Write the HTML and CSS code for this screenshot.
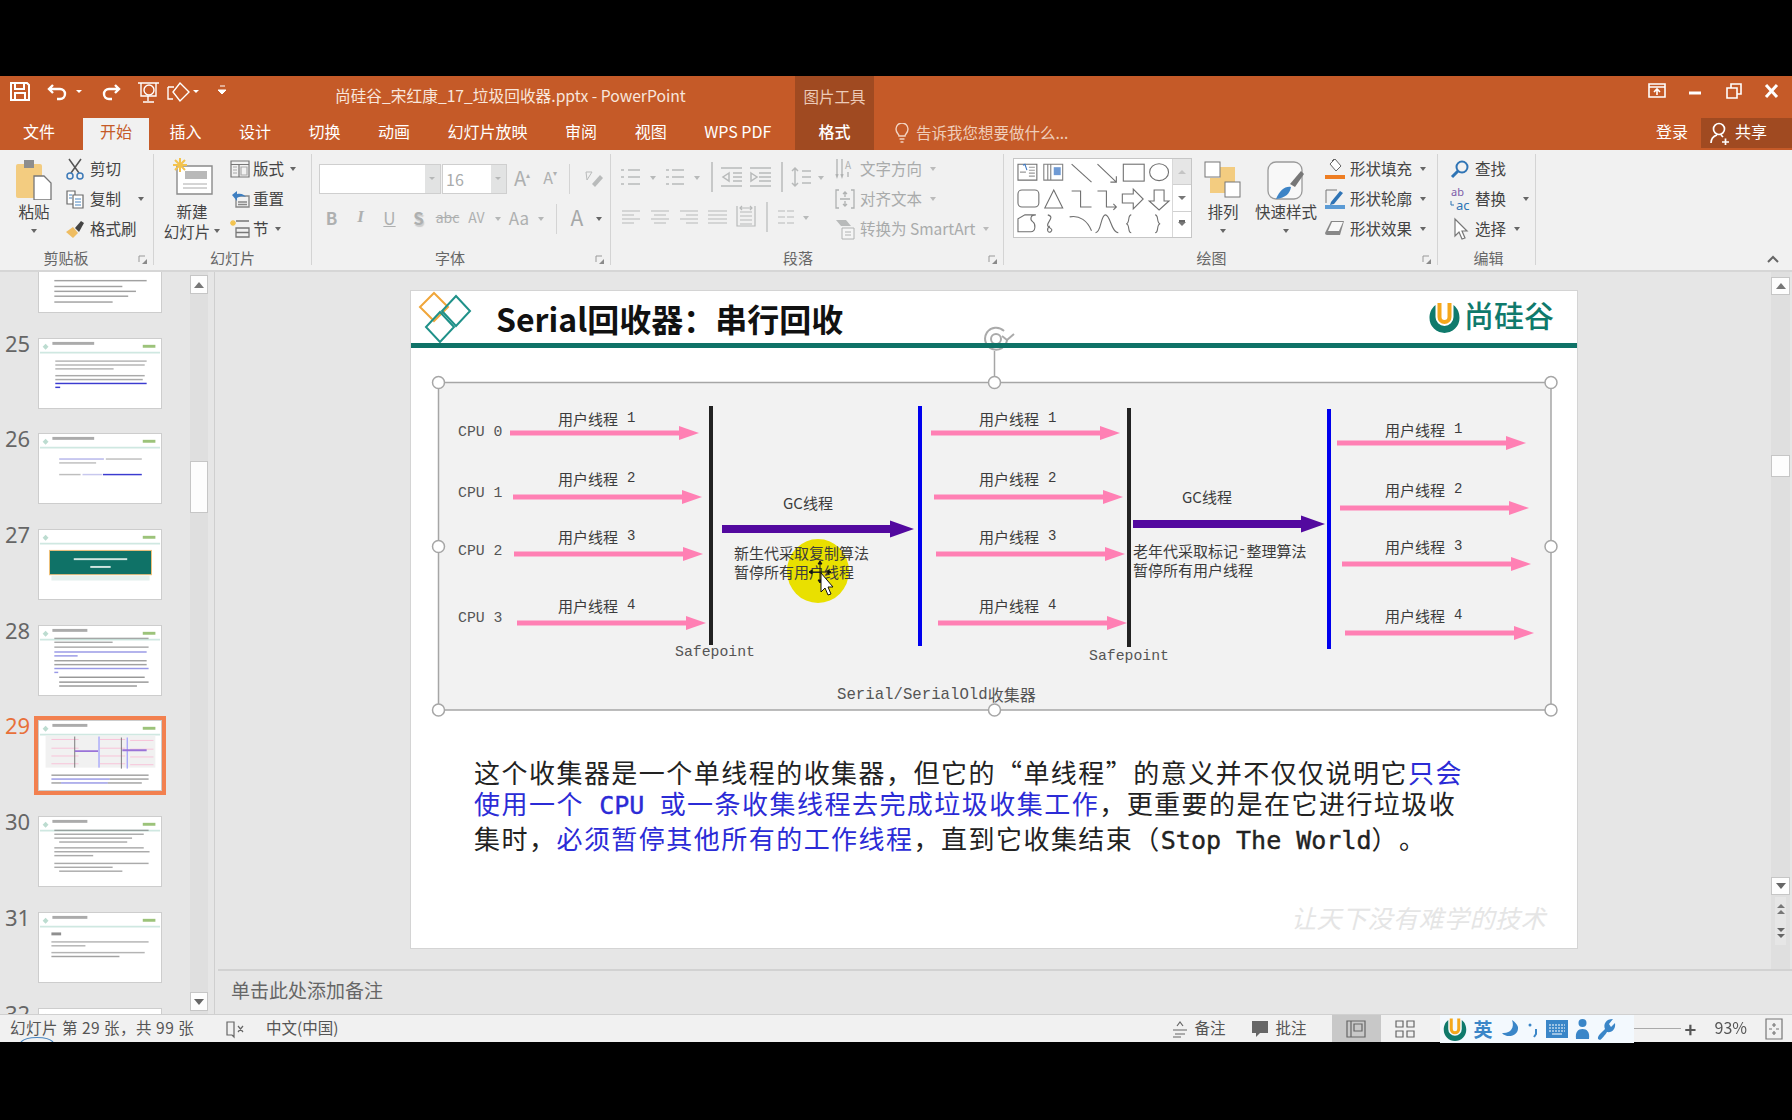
FILE: index.html
```html
<!DOCTYPE html>
<html lang="zh-CN">
<head>
    <meta charset="UTF-8">
    <title>尚硅谷_宋红康_17_垃圾回收器.pptx - PowerPoint</title>
    <link rel="stylesheet" href="styles.css">
</head>
<body>
<svg class="defs" width="0" height="0">
    <defs>
        <symbol id="u-logo" viewBox="0 0 32 32">
            <path d="M7 4C2 8 1 13 1 17a15 15 0 0 0 30 0c0-4-1-9-6-13v12a9 9 0 0 1-18 0z" fill="#0f7a6c"/>
            <path d="M11 2v14a5 5 0 0 0 10 0V2" fill="none" stroke="#f5a81c" stroke-width="4"/>
        </symbol>
        <symbol id="launcher" viewBox="0 0 10 10">
            <path d="M1 1h6M1 1v6" stroke="#999" fill="none"/>
            <path d="M9 4v5H4z" fill="#8a8a8a"/>
        </symbol>
        <symbol id="thumb-head" viewBox="0 0 124 71">
            <path d="M0 14h124" stroke="#cfe8e1" stroke-width="2"/>
            <path d="M6 5l3 3-3 3-3-3z" fill="#bcdcd0"/>
            <rect x="106" y="6" width="13" height="3" fill="#9cc37a"/>
        </symbol>
        <g id="pink">
            <rect x="0" y="-2.5" width="170" height="5" fill="#ff80b4"/>
            <polygon points="169,-7 189,0 169,7" fill="#ff80b4"/>
        </g>
        <g id="violet">
            <rect x="0" y="-4" width="170" height="8" fill="#53099f"/>
            <polygon points="168,-8.5 192,0 168,8.5" fill="#53099f"/>
        </g>
    </defs>
</svg>

<div class="app">
    <header class="chrome">
        <div class="title-left">
            <svg class="qat" width="240" height="30" viewBox="0 0 240 30" fill="none" stroke="#fff" stroke-width="2">
                <path d="M11 7h16l2 2v15H11zM15 7v6h9V7M15 24v-7h10v7"/>
                <path d="M53 9l-4 4 4 4M49 13h11a5 5 0 0 1 0 10h-3" stroke-width="2.4"/>
                <path d="M76 14h6l-3 3z" fill="#fff" stroke="none"/>
                <path d="M115 9l4 4-4 4M119 13h-10a5 5 0 0 0 0 10h3" stroke-width="2.4"/>
                <path d="M138 7h21M141 7v13h15V7M148 20v5M143 26h11" stroke-width="1.4"/>
                <circle cx="149" cy="14" r="5" stroke-width="1.4"/>
                <path d="M168 11h6M168 11v12h5M180 7l9 9-9 9-7-9z" stroke-width="1.4"/>
                <path d="M193 14h6l-3 3z" fill="#fff" stroke="none"/>
                <path d="M220 10h5M218 14h8l-4 4z" fill="#fff" stroke-width="1"/>
            </svg>
            <span class="doc-title">尚硅谷_宋红康_17_垃圾回收器.pptx - PowerPoint</span>
        </div>
        <div class="ctx-label">图片工具</div>
        <div class="win-btns">
            <svg width="143" height="30" viewBox="0 0 143 30" fill="none" stroke="#fff" stroke-width="1.6">
                <path d="M1 8h16v13H1zM1 11h16M9 19v-6M6 16l3-3 3 3"/>
                <path d="M41 17h12" stroke-width="3"/>
                <path d="M79 12h10v10H79zM83 12V8h10v10h-4"/>
                <path d="M118 9l11 12M129 9l-11 12" stroke-width="3"/>
            </svg>
        </div>

        <nav class="tabs">
            <span class="tab tab-file">文件</span>
            <span class="tab active">开始</span>
            <span class="tab">插入</span>
            <span class="tab">设计</span>
            <span class="tab">切换</span>
            <span class="tab">动画</span>
            <span class="tab">幻灯片放映</span>
            <span class="tab">审阅</span>
            <span class="tab">视图</span>
            <span class="tab">WPS PDF</span>
        </nav>
        <div class="ctx-tab">格式</div>
        <div class="tab-right">
            <div class="tell-me">
                <svg width="14" height="20" viewBox="0 0 14 20" fill="none" stroke="#f2d3c2" stroke-width="1.4">
                    <path d="M4 13c0-2-3-3-3-7a6 6 0 0 1 12 0c0 4-3 5-3 7zM4.500 16h5M5.500 19h3"/>
                </svg>
                <span>告诉我您想要做什么...</span>
            </div>
            <span class="login">登录</span>
            <div class="share">
                <svg width="20" height="24" viewBox="0 0 20 24" fill="none" stroke="#fff" stroke-width="1.7">
                    <circle cx="9" cy="8" r="5.500"/>
                    <path d="M1 22c0-5 3-7 6-8M11 14l2 2M12 21h7M15.500 17.500v7"/>
                </svg>
                <span>共享</span>
            </div>
        </div>
    </header>

    <section class="ribbon">
        <div class="group g-clip">
            <div class="group-body">
                <div class="large paste">
                    <svg width="36" height="46" viewBox="0 0 36 46">
                        <rect x="0" y="10" width="26" height="34" rx="2" fill="#f3cc80"/>
                        <rect x="8" y="6" width="10" height="8" fill="#8d8d8d"/>
                        <path d="M18 22h10l7 7v17H18z" fill="#fff" stroke="#777" stroke-width="1.3"/>
                    </svg>
                    <span>粘贴</span>
                    <i class="caret"></i>
                </div>
                <div class="small-col">
                    <div class="small"><svg width="20" height="22" viewBox="0 0 20 22" fill="none" stroke="#555" stroke-width="1.5"><path d="M4 1l10 14M16 1L6 15"/><circle cx="5" cy="18" r="3" stroke="#3d7ab8"/><circle cx="15" cy="18" r="3" stroke="#3d7ab8"/></svg><span>剪切</span></div>
                    <div class="small"><svg width="20" height="20" viewBox="0 0 20 20" fill="#fff" stroke="#6a6a6a" stroke-width="1.2"><path d="M2 2h8v13H2z"/><path d="M8 6h10v13H8z"/><path d="M10 10h6M10 13h6M10 16h6M4 6h3M4 9h3" stroke="#4a86c0"/></svg><span>复制</span><i class="caret caret-far"></i></div>
                    <div class="small"><svg width="20" height="20" viewBox="0 0 20 20"><path d="M1 13l7-5 5 6-5 5z" fill="#efbd62"/><path d="M10 9l6-7 3 2-5 9z" fill="#444"/></svg><span>格式刷</span></div>
                </div>
            </div>
            <div class="group-label">剪贴板<svg class="launch" width="10" height="10"><use href="#launcher"/></svg></div>
        </div>

        <div class="group g-slide">
            <div class="group-body">
                <div class="large new-slide">
                    <svg width="42" height="46" viewBox="0 0 42 46">
                        <path d="M6 12h35v28H6z" fill="#fff" stroke="#8b8b8b" stroke-width="1.4"/>
                        <rect x="14" y="17" width="22" height="8" fill="#b9b9b9"/>
                        <path d="M12 30h24M12 34h24" stroke="#aaa"/>
                        <path d="M9 4v14M2 11h14M4 6l10 10M14 6L4 16" stroke="#f3c34e" stroke-width="2"/>
                    </svg>
                    <span>新建</span>
                    <span class="with-caret">幻灯片<i class="caret"></i></span>
                </div>
                <div class="small-col">
                    <div class="small"><svg width="20" height="20" viewBox="0 0 20 20" fill="none" stroke="#777" stroke-width="1.2"><path d="M1 2h18v16H1zM1 5.500h18M9 5.500V18"/><path d="M3 8h4M3 11h4M3 14h4M11 8h6v8h-6z" stroke="#aaa"/></svg><span>版式</span><i class="caret"></i></div>
                    <div class="small"><svg width="20" height="20" viewBox="0 0 20 20" fill="none" stroke-width="1.4"><path d="M6 7h13v11H6zM8 13h9M8 15.500h9" stroke="#888"/><path d="M2 6l5-4v3c5-1 7 1 9 3-3-1-6-1-9 1v3z" fill="#3e7fc1"/></svg><span>重置</span></div>
                    <div class="small"><svg width="20" height="20" viewBox="0 0 20 20" fill="none" stroke="#777" stroke-width="1.3"><path d="M6 2h13M6 9h13v9H6zM6 13.500h13"/><path d="M3 1v6M0 4h6M1 2l4 4M5 2L1 6" stroke="#f3c34e"/></svg><span>节</span><i class="caret"></i></div>
                </div>
            </div>
            <div class="group-label">幻灯片</div>
        </div>

        <div class="group g-font">
            <div class="group-body font-body">
                <div class="font-row">
                    <span class="combo"><i class="combo-arrow"></i></span>
                    <span class="combo combo-size">16<i class="combo-arrow"></i></span>
                    <span class="fmt grow-a">A<sup>▴</sup></span>
                    <span class="fmt shrink-a">A<sup>▾</sup></span>
                    <i class="vsep"></i>
                    <svg width="20" height="20" viewBox="0 0 20 20"><path d="M3 3l6 0-5 8z" fill="none" stroke="#b9bbbb"/><path d="M9 15l8-9 3 3-8 9z" fill="#b9bbbb"/></svg>
                </div>
                <div class="font-row row-fmt">
                    <b class="fmt">B</b>
                    <i class="fmt serif">I</i>
                    <u class="fmt">U</u>
                    <span class="fmt shadow">S</span>
                    <s class="fmt small-fmt">abc</s>
                    <span class="fmt small-fmt">AV</span>
                    <i class="caret"></i>
                    <span class="fmt aa">Aa</span>
                    <i class="caret"></i>
                    <i class="vsep sep-a"></i>
                    <span class="fmt big-a">A</span>
                    <i class="caret"></i>
                </div>
            </div>
            <div class="group-label">字体<svg class="launch" width="10" height="10"><use href="#launcher"/></svg></div>
        </div>

        <div class="group g-para">
            <div class="group-body">
                <svg class="para-icons" width="224" height="84" viewBox="0 0 224 84" fill="none" stroke="#b8baba" stroke-width="1.5">
                    <path d="M17 8h12M17 15h12M17 22h12M10 8h3M10 15h3M10 22h3"/>
                    <path d="M39 14h6l-3 4z" fill="#b8baba" stroke="none"/>
                    <path d="M61 8h12M61 15h12M61 22h12M55 8h3M55 15h3M55 22h3"/>
                    <path d="M83 14h6l-3 4z" fill="#b8baba" stroke="none"/>
                    <path d="M101 0v30"/>
                    <path d="M110 6h21M122 11h9M122 15h9M122 19h9M110 24h21M118 11l-6 4 6 4z"/>
                    <path d="M139 6h21M148 11h12M148 15h12M148 19h12M139 24h21M140 11l6 4-6 4z"/>
                    <path d="M171 0v30"/>
                    <path d="M184 6v18M181 9l3-3 3 3M181 21l3 3 3-3M191 9h9M191 15h9M191 21h9"/>
                    <path d="M207 14h6l-3 4z" fill="#b8baba" stroke="none"/>
                    <g stroke-width="1.2">
                        <path d="M11 49h18M11 53h12M11 57h18M11 61h12"/>
                        <path d="M40 49h18M43 53h12M40 57h18M43 61h12"/>
                        <path d="M69 49h18M75 53h12M69 57h18M75 61h12"/>
                        <path d="M97 49h19M97 53h19M97 57h19M97 61h19"/>
                        <path d="M126 44v20h18V44M129 50h12M129 54h12M129 58h12M129 62h12M129 46h12M131 44l-2 2 2 2M139 44l2 2-2 2"/>
                        <path d="M156 40v30"/>
                        <path d="M167 49h7M176 49h7M167 55h7M176 55h7M167 61h7M176 61h7"/>
                    </g>
                    <path d="M192 54h6l-3 4z" fill="#b8baba" stroke="none"/>
                </svg>
                <div class="small-col dim">
                    <div class="small"><svg class="open" width="20" height="22" viewBox="0 0 20 22" fill="none" stroke="#b0b2b2" stroke-width="1.3"><path d="M2 1v17M7 1v17M1 16l1 3 1-3M6 16l1 3 1-3M13 14v5"/><text class="icon-a" x="10" y="11">A</text></svg><span>文字方向</span><i class="caret"></i></div>
                    <div class="small"><svg width="20" height="22" viewBox="0 0 20 22" fill="none" stroke="#b0b2b2" stroke-width="1.3"><path d="M4 2H1v18h3M16 2h3v18h-3M10 4v5M8 6l2-2 2 2M10 18v-5M8 16l2 2 2-2M5 11h10"/></svg><span>对齐文本</span><i class="caret"></i></div>
                    <div class="small"><svg width="20" height="22" viewBox="0 0 20 22"><path d="M1 2h10l5 6H6z" fill="#b8baba"/><path d="M7 10h12v11H7z" fill="#f5f5f5" stroke="#b0b2b2"/><path d="M10 14h6M10 17h6" stroke="#b0b2b2"/></svg><span>转换为 SmartArt</span><i class="caret"></i></div>
                </div>
            </div>
            <div class="group-label">段落<svg class="launch" width="10" height="10"><use href="#launcher"/></svg></div>
        </div>

        <div class="group g-draw">
            <div class="group-body">
                <div class="gallery">
                    <svg width="160" height="78" viewBox="0 0 160 78" fill="none" stroke="#707070" stroke-width="1.1">
                        <path d="M4 5h19v16H4z"/><path d="M6 13h6M15 8h6M15 11h6M15 14h6M15 17h6" stroke="#999"/>
                        <path d="M9 6l2-1 2 6" stroke="#3d78c2"/>
                        <path d="M30 5h19v16H30zM34 5v16M37 5v16" stroke="#808080"/><rect x="40" y="8" width="7" height="8" fill="#6f9ad4" stroke="none"/>
                        <path d="M58 5l20 18"/>
                        <path d="M84 5l19 18M103 17v6h-6"/>
                        <rect x="110" y="5" width="21" height="17"/>
                        <ellipse cx="146" cy="13" rx="9.500" ry="8.500"/>
                        <rect x="4" y="31" width="21" height="17" rx="4"/>
                        <path d="M40 31l-9 18h18z"/>
                        <path d="M58 32h9v16h11"/>
                        <path d="M84 32h9v16h10M100 45l3 3-3 3"/>
                        <path d="M109 35h11v-5l10 10-10 10v-6h-11z"/>
                        <path d="M141 31h10v11h5l-10 9-10-9h5z"/>
                        <path d="M4 73V60l7-4h11c-6 0-6 5-3 7 3 2 3 10-2 10z"/>
                        <path d="M34 56c8 2-2 8 0 11 2 3 6 3 3 6-3 2-5-3-1-6"/>
                        <path d="M56 58c10-2 18 4 22 14"/>
                        <path d="M82 74c6 0 5-18 10-18s6 18 13 18"/>
                        <path d="M118 56c-4 0-1 8-5 9 4 1 1 9 5 9"/>
                        <path d="M142 56c4 0 1 8 5 9-4 1-1 9-5 9"/>
                    </svg>
                    <div class="spinner">
                        <span><i class="tri up"></i></span>
                        <span class="on"><i class="tri down"></i></span>
                        <span class="on"><i class="tri down more"></i></span>
                    </div>
                </div>
                <div class="large arrange">
                    <svg width="38" height="46" viewBox="0 0 38 46">
                        <rect x="16" y="13" width="15" height="15" fill="#f3cc80"/>
                        <rect x="6" y="24" width="15" height="15" fill="#f3cc80"/>
                        <rect x="1" y="8" width="15" height="15" fill="#fff" stroke="#777"/>
                        <rect x="21" y="28" width="15" height="15" fill="#fff" stroke="#777"/>
                    </svg>
                    <span>排列</span>
                    <i class="caret"></i>
                </div>
                <div class="large quick">
                    <svg width="40" height="46" viewBox="0 0 40 46">
                        <rect x="2" y="8" width="34" height="37" rx="8" fill="#f8f8f8" stroke="#9a9a9a" stroke-width="1.3"/>
                        <path d="M10 45c4-9 9-13 15-12-1 6-5 11-15 12z" fill="#3d84c6"/>
                        <path d="M24 30l11-13 3 3-9 13z" fill="#777"/>
                    </svg>
                    <span>快速样式</span>
                    <i class="caret"></i>
                </div>
                <div class="small-col">
                    <div class="small"><svg width="20" height="22" viewBox="0 0 20 22"><path d="M5 6l5-5 6 7-5 5z" fill="#fff" stroke="#666"/><path d="M7 3l2-2" stroke="#666"/><rect y="17" width="20" height="4" fill="#ee7d22"/></svg><span>形状填充</span><i class="caret"></i></div>
                    <div class="small"><svg width="20" height="22" viewBox="0 0 20 22" fill="none"><path d="M12 2H1v13" stroke="#777"/><path d="M6 14l9-11 3 2-9 11-4 1z" fill="#2f74b5"/><rect y="17" width="20" height="4" fill="#5b9bd5"/></svg><span>形状轮廓</span><i class="caret"></i></div>
                    <div class="small"><svg width="20" height="20" viewBox="0 0 20 20"><path d="M6 2h13l-4 14H2a2 2 0 0 1-2-2z" fill="#888"/><path d="M7 3h11l-4 9H3z" fill="#f8f8f8"/></svg><span>形状效果</span><i class="caret"></i></div>
                </div>
            </div>
            <div class="group-label">绘图<svg class="launch" width="10" height="10"><use href="#launcher"/></svg></div>
        </div>

        <div class="group g-edit">
            <div class="group-body">
                <div class="small-col">
                    <div class="small"><svg width="20" height="20" viewBox="0 0 20 20" fill="none" stroke="#2f74b5" stroke-width="2"><circle cx="12" cy="8" r="5.500"/><path d="M8 12l-6 6" stroke-width="3"/></svg><span>查找</span></div>
                    <div class="small"><svg class="open" width="20" height="24" viewBox="0 0 20 24"><text class="icon-ab" x="1" y="9">ab</text><text class="icon-ac" x="6" y="23">ac</text><path d="M1 14v4h3" fill="none" stroke="#2f74b5"/></svg><span>替换</span><i class="caret caret-far"></i></div>
                    <div class="small"><svg width="20" height="24" viewBox="0 0 20 24" fill="#fff" stroke="#777" stroke-width="1.2"><path d="M5 2v17l4-4 3 7 3-1-3-7h5z"/></svg><span>选择</span><i class="caret"></i></div>
                </div>
            </div>
            <div class="group-label">编辑</div>
        </div>

        <svg class="collapse" width="14" height="10" viewBox="0 0 14 10" fill="none" stroke="#666" stroke-width="2"><path d="M2 8l5-5 5 5"/></svg>
    </section>

    <main class="workspace">
        <aside class="thumb-pane">
            <div class="thumb-list">
                <div class="thumb-row">
                    <span class="num"></span>
                    <svg class="thumb" viewBox="0 0 124 71">
                        <g fill="#555"><rect x="10" y="10" width="100" height="1"/><rect x="15" y="38" width="95" height="1.500"/><rect x="15" y="44" width="70" height="1.500"/><rect x="15" y="49" width="84" height="1.500"/><rect x="15" y="54" width="76" height="1.500"/><rect x="15" y="60" width="60" height="1.500"/></g>
                    </svg>
                </div>
                <div class="thumb-row">
                    <span class="num">25</span>
                    <svg class="thumb" viewBox="0 0 124 71">
                        <use href="#thumb-head" width="124" height="71"/><rect x="13" y="3" width="43" height="3" fill="#666"/>
                        <g fill="#777"><rect x="16" y="22" width="94" height="1.500"/><rect x="16" y="26" width="92" height="1.500"/><rect x="16" y="30" width="60" height="1.500"/></g>
                        <g fill="#666"><rect x="16" y="37" width="92" height="1.500"/><rect x="16" y="41" width="90" height="1.500"/></g>
                        <rect class="strong" x="16" y="45" width="94" height="1.500" fill="#3b3bd0"/><rect class="strong" x="16" y="49" width="5" height="1.500" fill="#3b3bd0"/>
                    </svg>
                </div>
                <div class="thumb-row">
                    <span class="num">26</span>
                    <svg class="thumb" viewBox="0 0 124 71">
                        <use href="#thumb-head" width="124" height="71"/><rect x="13" y="3" width="43" height="3" fill="#666"/>
                        <rect x="20" y="25" width="46" height="1.500" fill="#7a7ad8"/><rect x="68" y="25" width="37" height="1.500" fill="#888"/><rect x="20" y="29" width="38" height="1.500" fill="#888"/>
                        <rect x="20" y="41" width="22" height="1.500" fill="#888"/><rect x="44" y="41" width="20" height="1.500" fill="#9a9ae0"/><rect class="strong" x="65" y="41" width="40" height="1.500" fill="#3b3bd0"/>
                    </svg>
                </div>
                <div class="thumb-row">
                    <span class="num">27</span>
                    <svg class="thumb" viewBox="0 0 124 71">
                        <use href="#thumb-head" width="124" height="71"/>
                        <rect class="strong" x="10" y="21" width="105" height="25" fill="#0f7267" stroke="#f2c078"/>
                        <rect class="strong" x="12" y="47" width="101" height="5" fill="#e6f1ee"/>
                        <rect class="strong" x="35" y="29" width="55" height="2" fill="#cfe6e0"/><rect class="strong" x="52" y="37" width="21" height="2" fill="#cfe6e0"/>
                    </svg>
                </div>
                <div class="thumb-row">
                    <span class="num">28</span>
                    <svg class="thumb" viewBox="0 0 124 71">
                        <use href="#thumb-head" width="124" height="71"/><rect x="13" y="3" width="36" height="3" fill="#666"/>
                        <g fill="#666"><rect x="15" y="12" width="97" height="1.500"/><rect x="15" y="16" width="60" height="1.500"/><rect x="15" y="21" width="97" height="1.500"/></g>
                        <g fill="#4545d0"><rect x="15" y="26" width="95" height="1.500"/><rect x="15" y="30" width="24" height="1.500"/></g>
                        <g fill="#555"><rect x="15" y="35" width="95" height="1.500"/><rect x="15" y="39" width="95" height="1.500"/></g>
                        <g fill="#4545d0"><rect x="15" y="43" width="97" height="1.500"/><rect x="15" y="47" width="4" height="1.500"/></g>
                        <g fill="#444"><rect x="20" y="52" width="88" height="1.500"/><rect x="20" y="57" width="92" height="1.500"/><rect x="20" y="61" width="80" height="1.500"/></g>
                    </svg>
                </div>
                <div class="thumb-row selected">
                    <span class="num">29</span>
                    <svg class="thumb" viewBox="0 0 124 71">
                        <use href="#thumb-head" width="124" height="71"/><rect x="13" y="3" width="36" height="3" fill="#666"/>
                        <rect class="strong" x="6" y="15" width="113" height="33" fill="#f1f1f1"/>
                        <g stroke="#ff9cc4"><path d="M12 19h28M12 28h28M12 36h28M12 44h28M62 19h26M62 28h26M62 36h26M62 44h26M93 20h24M93 29h24M93 37h24M93 45h24"/></g>
                        <path d="M36 16v32M84 17v32" stroke="#777"/><path d="M61 16v32M90 17v32" stroke="#88f"/>
                        <path d="M36 31h24M85 30h25" stroke="#9a73d8" stroke-width="2"/>
                        <g fill="#555"><rect x="12" y="55" width="100" height="1.500"/><rect x="12" y="63" width="10" height="1.500"/></g>
                        <rect x="12" y="59" width="60" height="1.500" fill="#4545d0"/><rect x="72" y="59" width="40" height="1.500" fill="#555"/><rect x="22" y="63" width="48" height="1.500" fill="#4545d0"/><rect x="70" y="63" width="35" height="1.500" fill="#555"/>
                    </svg>
                </div>
                <div class="thumb-row">
                    <span class="num">30</span>
                    <svg class="thumb" viewBox="0 0 124 71">
                        <use href="#thumb-head" width="124" height="71"/><rect x="13" y="3" width="36" height="3" fill="#666"/>
                        <g fill="#666"><rect x="15" y="13" width="97" height="1.500"/><rect x="15" y="17" width="92" height="1.500"/><rect x="15" y="21" width="80" height="1.500"/><rect x="20" y="25" width="70" height="1.500"/><rect x="15" y="31" width="92" height="1.500"/><rect x="15" y="35" width="98" height="1.500"/><rect x="15" y="39" width="40" height="1.500"/><rect x="15" y="47" width="97" height="1.500"/><rect x="15" y="51" width="60" height="1.500"/><rect x="20" y="55" width="65" height="1.500"/></g>
                    </svg>
                </div>
                <div class="thumb-row">
                    <span class="num">31</span>
                    <svg class="thumb" viewBox="0 0 124 71">
                        <use href="#thumb-head" width="124" height="71"/><rect x="13" y="3" width="36" height="3" fill="#666"/>
                        <rect x="12" y="20" width="10" height="3" fill="#333"/>
                        <g fill="#777"><rect x="12" y="29" width="100" height="1.500"/><rect x="12" y="33" width="35" height="1.500"/><rect x="12" y="40" width="96" height="1.500"/></g>
                        <rect x="12" y="44" width="70" height="1.500" fill="#555"/>
                    </svg>
                </div>
                <div class="thumb-row">
                    <span class="num">32</span>
                    <svg class="thumb" viewBox="0 0 124 71"><use href="#thumb-head" width="124" height="71"/></svg>
                </div>
            </div>
            <div class="scroll scroll-left">
                <span class="scroll-btn"><i class="tri up"></i></span>
                <span class="scroll-thumb"></span>
                <span class="scroll-btn end"><i class="tri down"></i></span>
            </div>
        </aside>

        <div class="editor">
            <div class="editor-top">
                <div class="canvas">
                    <article class="slide">
                        <div class="slide-head">
                            <svg class="diamonds" width="56" height="52" viewBox="0 0 56 52" fill="none" stroke-width="2">
                                <path d="M16 2l14 14-14 14L2 16z" stroke="#f0a63a"/>
                                <path d="M38 5l14 15-14 15-14-15z" stroke="#1f9189"/>
                                <path d="M22 21l14 15-14 15L8 36z" stroke="#1f9189"/>
                            </svg>
                            <h1 class="slide-title">Serial回收器<span class="colon">：</span>串行回收</h1>
                            <div class="brand">
                                <svg width="33" height="32"><use href="#u-logo" width="33" height="32"/></svg>
                                <span>尚硅谷</span>
                            </div>
                        </div>

                        <svg class="diagram" width="1129" height="344" viewBox="430 374 1129 344">
                            <rect x="438.500" y="382.500" width="1112.500" height="327.500" fill="#f2f2f2"/>

                            <text class="d-mono" x="458" y="432">CPU 0</text>
                            <text class="d-mono" x="458" y="493">CPU 1</text>
                            <text class="d-mono" x="458" y="551">CPU 2</text>
                            <text class="d-mono" x="458" y="618">CPU 3</text>

                            <text class="d-cn" x="558" y="420">用户线程<tspan class="d-digit" dx="9">1</tspan></text>
                            <text class="d-cn" x="558" y="480">用户线程<tspan class="d-digit" dx="9">2</tspan></text>
                            <text class="d-cn" x="558" y="538">用户线程<tspan class="d-digit" dx="9">3</tspan></text>
                            <text class="d-cn" x="558" y="607">用户线程<tspan class="d-digit" dx="9">4</tspan></text>
                            <use href="#pink" x="510" y="433"/>
                            <use href="#pink" x="513" y="497"/>
                            <use href="#pink" x="514" y="554"/>
                            <use href="#pink" x="517" y="623"/>

                            <rect x="709" y="406" width="4" height="239" fill="#222"/>
                            <text class="d-mono" x="675" y="652">Safepoint</text>

                            <ellipse cx="818" cy="571" rx="31" ry="32" fill="#e9e000"/>
                            <text class="d-cn" x="783" y="504">GC线程</text>
                            <use href="#violet" x="722" y="529"/>
                            <text class="d-cn" x="734" y="554">新生代采取复制算法</text>
                            <text class="d-cn" x="734" y="573">暂停所有用户线程</text>

                            <rect x="918" y="406" width="4" height="240" fill="#0000ee"/>

                            <text class="d-cn" x="979" y="420">用户线程<tspan class="d-digit" dx="9">1</tspan></text>
                            <text class="d-cn" x="979" y="480">用户线程<tspan class="d-digit" dx="9">2</tspan></text>
                            <text class="d-cn" x="979" y="538">用户线程<tspan class="d-digit" dx="9">3</tspan></text>
                            <text class="d-cn" x="979" y="607">用户线程<tspan class="d-digit" dx="9">4</tspan></text>
                            <use href="#pink" x="931" y="433"/>
                            <use href="#pink" x="934" y="497"/>
                            <use href="#pink" x="936" y="554"/>
                            <use href="#pink" x="938" y="623"/>

                            <rect x="1127" y="408" width="4" height="239" fill="#222"/>
                            <text class="d-mono" x="1089" y="656">Safepoint</text>

                            <text class="d-cn" x="1182" y="498">GC线程</text>
                            <use href="#violet" x="1133" y="524"/>
                            <text class="d-cn" x="1133" y="552">老年代采取标记<tspan class="d-digit">-</tspan>整理算法</text>
                            <text class="d-cn" x="1133" y="571">暂停所有用户线程</text>

                            <rect x="1327" y="409" width="4" height="240" fill="#0000ee"/>

                            <text class="d-cn" x="1385" y="431">用户线程<tspan class="d-digit" dx="9">1</tspan></text>
                            <text class="d-cn" x="1385" y="491">用户线程<tspan class="d-digit" dx="9">2</tspan></text>
                            <text class="d-cn" x="1385" y="548">用户线程<tspan class="d-digit" dx="9">3</tspan></text>
                            <text class="d-cn" x="1385" y="617">用户线程<tspan class="d-digit" dx="9">4</tspan></text>
                            <use href="#pink" x="1337" y="443"/>
                            <use href="#pink" x="1340" y="508"/>
                            <use href="#pink" x="1342" y="564"/>
                            <use href="#pink" x="1345" y="633"/>

                            <text class="d-mono d-caption" x="837" y="695">Serial/SerialOld<tspan class="d-cn-inner" dy="-1">收集器</tspan></text>

                            <!-- selection frame -->
                            <g class="sel">
                                <rect x="438.500" y="382.500" width="1112.500" height="327.500" fill="none"/>
                                <path d="M994.500 382v-31" fill="none"/>
                                <path class="rotate" d="M1004 331a11 11 0 1 0 3 9" fill="none"/>
                                <path class="rotate" d="M1002 336l5 4 7-6" fill="none"/>
                                <circle class="rotate" cx="996" cy="339" r="5" fill="none"/>
                                <circle cx="438.500" cy="382.500" r="6"/>
                                <circle cx="994.500" cy="382.500" r="6"/>
                                <circle cx="1551" cy="382.500" r="6"/>
                                <circle cx="438.500" cy="546.500" r="6"/>
                                <circle cx="1551" cy="546.500" r="6"/>
                                <circle cx="438.500" cy="710" r="6"/>
                                <circle cx="994.500" cy="710" r="6"/>
                                <circle cx="1551" cy="710" r="6"/>
                            </g>

                            <!-- mouse pointer -->
                            <g class="pointer-move">
                                <path d="M820 563v18M811 572h18M820 561l-2 3h4zM820 583l-2-3h4zM809 572l3-2v4zM831 572l-3-2v4z"/>
                            </g>
                            <path class="pointer" d="M821 573v19l4-4 3 7 3-1-3-7h5z"/>
                        </svg>

                        <div class="slide-text">
                            <p>这个收集器是一个单线程的收集器，但它的“单线程”的意义并不仅仅说明它<span class="blue">只会</span></p>
                            <p><span class="blue">使用一个 <span class="code code-wide">CPU</span> 或一条收集线程去完成垃圾收集工作</span>，更重要的是在它进行垃圾收</p>
                            <p class="last">集时，<span class="blue">必须暂停其他所有的工作线程</span>，直到它收集结束（<span class="code">Stop The World</span>）。</p>
                        </div>
                        <div class="watermark">让天下没有难学的技术</div>
                    </article>
                </div>
                <div class="scroll scroll-right">
                    <span class="scroll-btn"><i class="tri up"></i></span>
                    <span class="scroll-thumb"></span>
                    <span class="scroll-btn end"><i class="tri down"></i></span>
                    <span class="page-jump"><i class="tri up"></i><i class="tri up"></i></span>
                    <span class="page-jump"><i class="tri down"></i><i class="tri down"></i></span>
                </div>
            </div>
            <div class="notes">单击此处添加备注</div>
        </div>
    </main>

    <footer class="statusbar">
        <svg class="st-arc" width="34" height="6" viewBox="0 0 34 6" fill="none" stroke="#4a86c0" stroke-width="1.2"><path d="M1 6c5-6 27-6 32 0"/></svg>
        <span class="st-count">幻灯片 第 29 张，共 99 张</span>
        <svg class="st-spell" width="20" height="20" viewBox="0 0 20 20" fill="none" stroke="#666" stroke-width="1.200"><path d="M9 3H2v13h5l2 2zM9 3v15M13 7l5 6M18 7l-5 6"/></svg>
        <span class="st-lang">中文(中国)</span>
        <span class="st-spacer"></span>
        <svg width="16" height="18" viewBox="0 0 16 18" fill="none" stroke="#666" stroke-width="1.200"><path d="M1 10h14M3 14h10M1 17h8M5 6l3-4 3 4"/></svg>
        <span class="st-item">备注</span>
        <svg class="st-gap" width="18" height="18" viewBox="0 0 18 18"><path d="M1 1h16v12H9l-4 4v-4H1z" fill="#666"/></svg>
        <span class="st-item">批注</span>
        <span class="view-btn on">
            <svg width="20" height="18" viewBox="0 0 20 18" fill="none" stroke="#666" stroke-width="1.200"><path d="M1 1h18v16H1zM5 1v16M8 4h8v7H8z"/></svg>
        </span>
        <span class="view-btn">
            <svg width="20" height="20" viewBox="0 0 20 20" fill="none" stroke="#666" stroke-width="1.200"><path d="M1 2h7v6H1zM12 2h7v6h-7zM1 12h7v6H1zM12 12h7v6h-7z"/></svg>
        </span>
        <div class="ime">
            <svg width="24" height="24"><use href="#u-logo" width="24" height="24"/></svg>
            <span class="ime-lang">英</span>
            <svg width="20" height="20" viewBox="0 0 20 20"><path d="M12 1c3 8-2 14-10 13 5 6 17 3 16-6-1-3-3-5-6-7z" fill="#3a86c8"/></svg>
            <svg width="12" height="20" viewBox="0 0 12 20"><circle cx="3" cy="6" r="1.500" fill="#3a86c8"/><path d="M9 10v5l-2 3" fill="none" stroke="#3a86c8" stroke-width="2"/></svg>
            <svg width="22" height="18" viewBox="0 0 22 18"><rect width="22" height="18" fill="#3a86c8"/><path d="M3 5h16M3 8h16M3 11h16" stroke="#fff" stroke-dasharray="2 1"/><path d="M6 14h10" stroke="#fff"/></svg>
            <svg width="15" height="22" viewBox="0 0 15 22"><circle cx="7.500" cy="5" r="4" fill="#3a86c8"/><path d="M1 21c-1-7 2-10 6.500-10S15 14 14 21z" fill="#3a86c8"/></svg>
            <svg width="19" height="22" viewBox="0 0 19 22"><path d="M1 21c-1-3 4-7 7-10-2-5 1-10 8-10l-4 5 2 3 4-4c1 6-3 10-8 9-2 3-5 7-7 8z" fill="#3a86c8"/></svg>
        </div>
        <span class="zoom-line"></span>
        <span class="zoom-plus">+</span>
        <span class="zoom-val">93%</span>
        <svg width="18" height="22" viewBox="0 0 18 22" fill="none" stroke="#777" stroke-width="1.200"><path d="M1 1h16v20H1zM9 5v4M7 7h4M9 13v4M7 15h4M4 11h3M11 11h3"/></svg>
    </footer>
</div>
</body>
</html>
```

FILE: styles.css
```css
* {
    box-sizing: border-box;
}
html, body {
    margin: 0;
    height: 100%;
    background: #000;
    overflow: hidden;
}
body {
    font-family: "Noto Sans CJK SC", "Noto Sans", sans-serif;
    color: #444;
    font-size: 15.5px;
}
.defs {
    position: absolute;
}
i {
    font-style: normal;
}
.app {
    margin-top: 76px;
    height: 966px;
    display: flex;
    flex-direction: column;
    background: #e6e6e6;
    filter: blur(0.45px);
}

/* title bar + tabs */
.chrome {
    display: grid;
    grid-template-columns: 795px 79px 1fr;
    grid-template-rows: 42px 32px;
    background: #c55a28;
    color: #fff;
    flex: none;
}
.title-left {
    display: flex;
    align-items: flex-start;
}
.qat {
    flex: none;
}
.doc-title {
    margin-left: 95px;
    font-size: 15.700px;
    line-height: 40px;
    color: #f8e6dc;
    white-space: nowrap;
}
.ctx-label, .ctx-tab {
    background: #a04a21;
    text-align: center;
}
.ctx-label {
    line-height: 40px;
    color: #eccab8;
}
.ctx-tab {
    line-height: 26px;
    font-size: 16px;
    font-weight: 500;
}
.win-btns {
    display: flex;
    justify-content: flex-end;
    padding-right: 1px;
}
.tabs {
    display: flex;
    gap: 3.5px;
    padding-left: 6px;
    font-size: 16px;
}
.tab {
    padding: 0 17px;
    line-height: 26px;
    height: 32px;
    white-space: nowrap;
}
.tab-file {
    margin-right: 7.5px;
}
.tab.active {
    background: #f1f1f1;
    color: #c55a28;
}
.tab-right {
    display: flex;
    align-items: flex-start;
}
.tell-me {
    margin-left: 21px;
    display: flex;
    align-items: center;
    gap: 7px;
    height: 30px;
    font-size: 15.500px;
    color: #efcdba;
}
.tell-me span {
    margin-top: -3px;
}
.login {
    margin-left: auto;
    line-height: 26px;
    font-size: 16px;
}
.share {
    margin-left: 13px;
    width: 91px;
    height: 30px;
    background: #a04a21;
    display: flex;
    align-items: center;
    gap: 5px;
    padding-left: 9px;
    font-size: 16px;
}
.share span {
    margin-top: -4px;
}

/* ribbon */
.ribbon {
    position: relative;
    flex: none;
    height: 122px;
    background: #f1f1f1;
    border-bottom: 2px solid #d6d6d6;
    display: flex;
    padding-top: 4px;
}
.group {
    position: relative;
    display: flex;
    flex-direction: column;
    border-right: 1px solid #d4d4d4;
    height: 111px;
}
.g-clip { width: 154px; }
.g-slide { width: 158px; }
.g-font { width: 299px; }
.g-para { width: 393px; }
.g-draw { width: 434px; }
.g-edit { width: 98px; }
.group-body {
    height: 94px;
    flex: none;
    display: flex;
}
.group-label {
    line-height: 20px;
    text-align: center;
    color: #666;
    font-size: 15px;
}
.g-clip .group-label { padding-right: 21px; }
.g-font .group-label { padding-right: 22px; }
.g-para .group-label { padding-right: 18px; }
.g-draw .group-label { padding-right: 18px; }
.g-edit .group-label { padding-left: 4px; }
.launch {
    position: absolute;
    right: 5px;
    bottom: 0;
}
.large {
    display: flex;
    flex-direction: column;
    align-items: center;
    flex: none;
    line-height: 20px;
    white-space: nowrap;
}
.large svg {
    margin-bottom: 1px;
}
.large .caret {
    margin-top: 8px;
}
.with-caret {
    display: flex;
    align-items: center;
}
.with-caret .caret {
    margin: 0 0 0 4px;
}
.paste { width: 65px; padding-left: 3px; }
.new-slide { width: 76px; }
.arrange { width: 54px; margin-left: 4px; }
.quick { width: 72px; }
.small-col {
    display: flex;
    flex-direction: column;
}
.small {
    height: 30px;
    display: flex;
    align-items: center;
    gap: 5px;
    white-space: nowrap;
}
.small span {
    margin-top: -2px;
}
.small svg {
    flex: none;
}
.small svg.open {
    overflow: visible;
}
.g-slide .small {
    gap: 3px;
}
.small .caret {
    margin-left: 3px;
}
.small .caret-far {
    margin-left: 12px;
}
.caret {
    display: inline-block;
    width: 0;
    height: 0;
    border: 3.5px solid transparent;
    border-top: 4px solid #666;
    border-bottom: 0;
}
.dim {
    color: #a9abab;
}
.dim .caret {
    border-top-color: #bbb;
}
.g-font .caret {
    border-top-color: #b5b7b7;
    margin: 0 3.5px;
}
.g-font .row-fmt .caret:last-child {
    border-top-color: #666;
    margin-left: 7px;
}

/* font group */
.font-body {
    flex-direction: column;
    padding: 10px 0 0 7px;
    color: #aeb0b0;
}
.font-row {
    display: flex;
    align-items: center;
    height: 30px;
}
.row-fmt {
    margin: 10px 0 0 -2px;
}
.combo {
    position: relative;
    width: 122px;
    height: 30px;
    background: #fff;
    border: 1px solid #cfcfcf;
    display: block;
    font-size: 16px;
    line-height: 28px;
    padding-left: 3px;
    color: #a9abab;
}
.combo-size {
    width: 65px;
    margin-left: 1px;
}
.combo-arrow {
    position: absolute;
    right: 0;
    top: 0;
    bottom: 0;
    width: 15px;
    background: #e2e3e3;
}
.combo-arrow::after {
    content: "";
    position: absolute;
    left: 4px;
    top: 12px;
    border: 3px solid transparent;
    border-top: 3px solid #b5b7b7;
}
.fmt {
    display: block;
    width: 29px;
    text-align: center;
    font-size: 17px;
    font-style: normal;
    margin-top: -4px;
}
.grow-a {
    width: 24px;
    margin-left: 3px;
    font-size: 20px;
}
.shrink-a {
    width: 24px;
    margin-left: 4px;
    font-size: 16px;
}
.fmt sup {
    font-size: 8px;
    vertical-align: 8px;
    line-height: 0;
}
.vsep {
    width: 1px;
    height: 30px;
    background: #d4d4d4;
    margin: 0 13px 0 7px;
}
.font-row .fmt.serif {
    font-family: "Liberation Serif", serif;
    font-style: italic;
    font-weight: bold;
}
.shadow {
    text-shadow: 1px 2px 1px #ccc;
    font-weight: bold;
}
.small-fmt {
    font-size: 14px;
}
.aa {
    width: 30px;
    font-size: 17px;
}
.sep-a {
    margin: 0 8px 0 9px;
}
.big-a {
    width: 24px;
    font-size: 21px;
    color: #a6a8a8;
}

/* paragraph + drawing */
.para-icons {
    flex: none;
    margin-top: 8px;
}
.icon-a {
    font-size: 10px;
    fill: #b0b2b2;
    stroke: none;
}
.gallery {
    flex: none;
    width: 179px;
    height: 80px;
    margin: 4px 0 0 9px;
    display: flex;
    background: #fff;
    border: 1px solid #c6c6c6;
}
.gallery svg {
    flex: none;
}
.gallery > svg {
    margin-right: -1px;
    width: 159px;
}
.spinner {
    width: 19px;
    margin-left: auto;
    display: flex;
    flex-direction: column;
    border-left: 1px solid #d8d8d8;
    background: #f2f2f2;
}
.spinner span {
    flex: 1;
    display: flex;
    align-items: center;
    justify-content: center;
    border-bottom: 1px solid #d0d0d0;
    background: #e6e6e6;
}
.spinner .on {
    background: #fff;
}
.spinner span:last-child {
    border-bottom: 0;
}
.spinner .tri {
    border-left-width: 4px;
    border-right-width: 4px;
}
.spinner .tri.up {
    border-bottom: 4px solid #c4c4c4;
}
.spinner .tri.down {
    border-top: 4px solid #777;
}
.g-draw .small-col {
    margin-left: 3px;
}
.g-edit .small-col {
    margin-left: 12px;
}
.icon-ab {
    font: 11px "Noto Sans", sans-serif;
    fill: #7c5ca8;
}
.icon-ac {
    font: 13px "Noto Sans", sans-serif;
    fill: #2f74b5;
}
.collapse {
    position: absolute;
    right: 12px;
    bottom: 6px;
}

/* triangles for scroll buttons */
.tri {
    display: block;
    width: 0;
    height: 0;
    border-left: 5px solid transparent;
    border-right: 5px solid transparent;
}
.tri.up {
    border-bottom: 6px solid #777;
}
.tri.down {
    border-top: 6px solid #666;
}
.tri.more {
    box-shadow: 0 -3px 0 -1px #666;
}

/* workspace */
.workspace {
    flex: 1;
    min-height: 0;
    display: flex;
}
.thumb-pane {
    flex: none;
    width: 215px;
    display: flex;
    border-right: 1px solid #cfcfcf;
    overflow: hidden;
}
.thumb-list {
    flex: none;
    width: 190px;
    margin-top: -34px;
}
.thumb-row {
    height: 95.700px;
    display: flex;
    padding-top: 4px;
}
.num {
    width: 38px;
    flex: none;
    padding-left: 5px;
    font-size: 22px;
    line-height: 10px;
    color: #666;
    font-family: "Noto Sans", sans-serif;
}
.thumb {
    width: 124px;
    height: 71px;
    background: #fff;
    border: 1px solid #cdcdcd;
    flex: none;
    filter: blur(0.5px);
}
.thumb g, .thumb > rect {
    opacity: 0.55;
}
.thumb > rect.strong {
    opacity: 1;
}
.selected .num {
    color: #e8703a;
}
.selected .thumb {
    outline: 4px solid #f2804f;
    outline-offset: 0;
    filter: none;
}
.scroll {
    flex: none;
    display: flex;
    flex-direction: column;
    align-items: stretch;
    background: #dfdfdf;
}
.scroll-btn, .scroll-thumb {
    display: flex;
    align-items: center;
    justify-content: center;
    background: #fdfdfd;
    border: 1px solid #c6c6c6;
}
.scroll-btn {
    height: 19px;
}
.scroll-left {
    width: 18px;
    padding: 3px 0;
}
.scroll-left .scroll-thumb {
    height: 52px;
    margin-top: 167px;
}
.scroll-left .end {
    margin-top: auto;
}
.editor {
    flex: 1;
    min-width: 0;
    display: flex;
    flex-direction: column;
}
.editor-top {
    height: 697px;
    display: flex;
}
.canvas {
    flex: 1;
    padding: 18px 0 0 195px;
}
.scroll-right {
    width: 19px;
    margin-right: 2px;
    padding-top: 5px;
    height: 100%;
}
.scroll-right .scroll-btn {
    height: 18px;
}
.scroll-right .scroll-thumb {
    height: 22px;
    margin-top: 160px;
}
.scroll-right .end.scroll-btn {
    margin: 400px 0 2px;
}
.page-jump {
    display: flex;
    flex-direction: column;
    align-items: center;
    height: 24px;
    background: #e6e6e6;
    margin-left: 4px;
    margin-right: 4px;
    justify-content: center;
}
.page-jump .tri {
    border-left-width: 4px;
    border-right-width: 4px;
    border-bottom-width: 4px;
    border-top-width: 4px;
    margin: 1px 0;
}
.notes {
    flex: none;
    height: 45px;
    margin-left: 3px;
    border-top: 2px solid #d2d2d2;
    padding-left: 13px;
    line-height: 38px;
    font-size: 19px;
    color: #666;
}

/* the slide */
.slide {
    position: relative;
    width: 1168px;
    height: 659px;
    background: #fff;
    border: 1px solid #d4d4d4;
}
.slide-head {
    position: relative;
    height: 57px;
    border-bottom: 5px solid #0f7267;
    display: flex;
    align-items: flex-start;
}
.diamonds {
    flex: none;
    margin: 0 0 0 7px;
}
.slide-title {
    margin: 7px 0 0 22px;
    font-size: 32px;
    line-height: 40px;
    font-weight: 700;
    color: #111;
    white-space: nowrap;
}
.colon {
    font-family: "Noto Sans CJK TC", sans-serif;
}
.brand {
    margin: 10px 23px 0 auto;
    display: flex;
    align-items: center;
    gap: 3px;
    font-size: 30px;
    line-height: 32px;
    font-weight: 500;
    color: #0f7a6c;
}
.brand span {
    margin-top: -6px;
}
.diagram {
    display: block;
    overflow: visible;
    margin: 26px 0 0 19px;
}
.diagram text {
    dominant-baseline: central;
}
.d-mono {
    font: 14.800px "Liberation Mono", "Noto Sans CJK SC", monospace;
    fill: #555;
}
.d-caption {
    font-size: 15.700px;
}
.d-cn {
    font: 15px "Noto Sans CJK SC", sans-serif;
    fill: #3c3c3c;
    transform: translateY(-2px);
}
.d-cn-inner {
    font: 16px "Noto Sans CJK SC", sans-serif;
}
.d-digit {
    font: 14px "Liberation Mono", monospace;
}
.sel {
    stroke: #a6a6a6;
    stroke-width: 1.500;
    fill: #fff;
}
.rotate {
    stroke: #aaa;
    stroke-width: 2;
}
.pointer-move path {
    fill: #111;
    stroke: #111;
    stroke-width: 1;
}
.pointer {
    fill: #fff;
    stroke: #111;
    stroke-width: 1;
}
.slide-text {
    margin: 38px 0 0 63px;
    font-size: 26px;
    letter-spacing: 1.470px;
    color: #222;
    white-space: nowrap;
    text-spacing-trim: space-all;
}
.slide-text p {
    margin: 0;
    line-height: 32px;
    height: 31px;
}
.slide-text .last {
    margin-top: 4px;
}
.blue {
    color: #2b2bd6;
}
.code {
    font-family: "DejaVu Sans Mono", monospace;
    font-size: 25px;
    letter-spacing: 0;
    -webkit-text-stroke: 0.4px currentColor;
}
.code-wide {
    margin: 0 8px;
}
.watermark {
    position: absolute;
    right: 31px;
    bottom: 13px;
    font-size: 25px;
    font-style: italic;
    color: #e5e5e5;
    letter-spacing: 0.500px;
    white-space: nowrap;
}

/* status bar */
.statusbar {
    position: relative;
    flex: none;
    height: 28px;
    background: #f1f1f1;
    border-top: 1px solid #d0d0d0;
    display: flex;
    align-items: center;
    padding-left: 10px;
    color: #555;
    font-size: 15.500px;
}
.st-arc {
    position: absolute;
    left: 20px;
    bottom: 0;
}
.st-count, .st-lang, .st-item, .zoom-val {
    margin-top: -4px;
}
.st-count {
    width: 215px;
    white-space: nowrap;
    letter-spacing: 0.500px;
}
.st-lang {
    margin-left: 21px;
}
.st-spacer {
    flex: 1;
}
.st-item {
    margin-left: 6px;
}
.st-gap {
    margin-left: 26px;
}
.view-btn {
    height: 27px;
    width: 49px;
    display: flex;
    align-items: center;
    justify-content: center;
}
.view-btn.on {
    background: #c8c8c8;
    margin-left: 25px;
}
.ime {
    height: 28px;
    width: 194px;
    margin-left: 10px;
    background: #f3f9fe;
    display: flex;
    align-items: center;
    gap: 7px;
    padding-left: 3px;
}
.ime-lang {
    font-size: 19px;
    color: #3a86c8;
    font-weight: 700;
}
.zoom-line {
    width: 47px;
    height: 1px;
    background: #aaa;
}
.zoom-plus {
    margin-left: 4px;
    font-size: 20px;
    font-weight: 700;
    width: 14px;
}
.zoom-val {
    margin-left: 16px;
    margin-right: 18px;
    font-size: 16px;
}
.statusbar > svg:last-child {
    margin-right: 9px;
}
```
